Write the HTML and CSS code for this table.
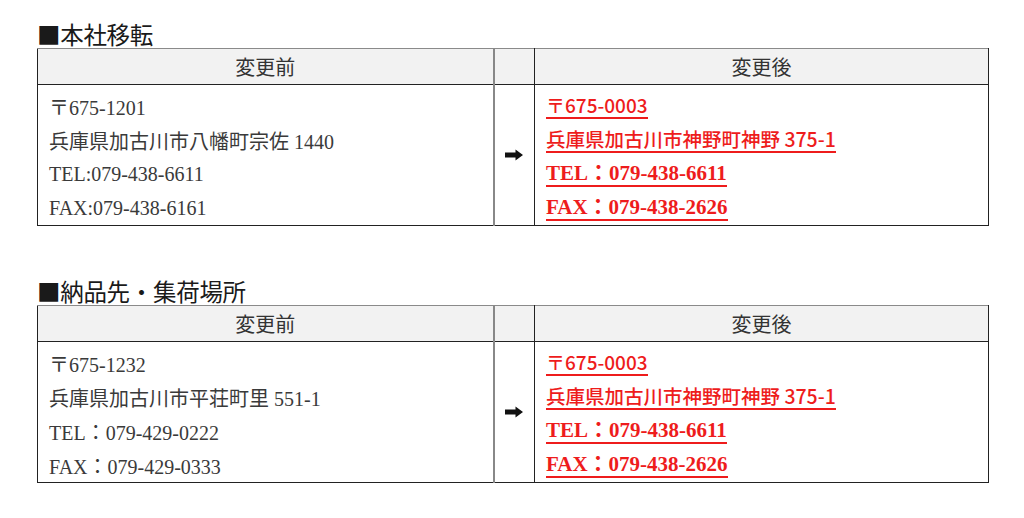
FILE: index.html
```html
<!DOCTYPE html>
<html lang="ja">
<head>
<meta charset="utf-8">
<link rel="stylesheet" href="styles.css">
</head>
<body>
<div class="page">
  <section class="block first">
    <h2 class="title">■本社移転</h2>
    <table class="change">
      <colgroup><col class="c-before"><col class="c-arrow"><col class="c-after"></colgroup>
      <thead>
        <tr><th>変更前</th><th class="arrow-head"></th><th>変更後</th></tr>
      </thead>
      <tbody>
        <tr>
          <td class="before">
            <div class="line">〒675-1201</div>
            <div class="line">兵庫県加古川市八幡町宗佐 1440</div>
            <div class="line">TEL:079-438-6611</div>
            <div class="line">FAX:079-438-6161</div>
          </td>
          <td class="arrow-cell"><svg class="arrow" width="18" height="12" viewBox="0 0 18 12"><path d="M0 3.5h10.5V0.5L18 6l-7.5 5.5v-3H0z" fill="#111"/></svg></td>
          <td class="after">
            <div class="line"><span class="mark sans">〒675-0003</span></div>
            <div class="line"><span class="mark sans addr">兵庫県加古川市神野町神野 375-1</span></div>
            <div class="line"><span class="mark serif">TEL：079-438-6611</span></div>
            <div class="line"><span class="mark serif">FAX：079-438-2626</span></div>
          </td>
        </tr>
      </tbody>
    </table>
  </section>

  <section class="block second">
    <h2 class="title">■納品先・集荷場所</h2>
    <table class="change">
      <colgroup><col class="c-before"><col class="c-arrow"><col class="c-after"></colgroup>
      <thead>
        <tr><th>変更前</th><th class="arrow-head"></th><th>変更後</th></tr>
      </thead>
      <tbody>
        <tr>
          <td class="before">
            <div class="line">〒675-1232</div>
            <div class="line">兵庫県加古川市平荘町里 551-1</div>
            <div class="line">TEL：079-429-0222</div>
            <div class="line">FAX：079-429-0333</div>
          </td>
          <td class="arrow-cell"><svg class="arrow" width="18" height="12" viewBox="0 0 18 12"><path d="M0 3.5h10.5V0.5L18 6l-7.5 5.5v-3H0z" fill="#111"/></svg></td>
          <td class="after">
            <div class="line"><span class="mark sans">〒675-0003</span></div>
            <div class="line"><span class="mark sans addr">兵庫県加古川市神野町神野 375-1</span></div>
            <div class="line"><span class="mark serif">TEL：079-438-6611</span></div>
            <div class="line"><span class="mark serif">FAX：079-438-2626</span></div>
          </td>
        </tr>
      </tbody>
    </table>
  </section>
</div>
</body>
</html>
```

FILE: styles.css
```css
html, body {
  margin: 0;
  padding: 0;
  background: #fff;
}

.page {
  padding: 20px 0 0 37px;
  font-family: "Noto Sans CJK JP", "Noto Sans", sans-serif;
  color: #333;
}

.block.second {
  margin-top: 51px;
}

.title {
  margin: 0;
  font-size: 23.5px;
  font-weight: 400;
  line-height: 28px;
  height: 28px;
  color: #1a1a1a;
  letter-spacing: -0.3px;
}

.change {
  border-collapse: collapse;
  width: 951px;
  table-layout: fixed;
}

.c-before { width: 456px; }
.c-arrow { width: 41px; }
.c-after { width: 454px; }

.change th {
  height: 35px;
  padding: 0;
  background: #f2f2f2;
  font-size: 20px;
  font-weight: 400;
  color: #333;
  text-align: center;
  border-top: 1px solid #8a8a8a;
  border-bottom: 1px solid #222;
  border-left: 1px solid #222;
  border-right: 1px solid #222;
  line-height: 35px;
}

.change td {
  padding: 4px 0 0 11px;
  height: 136px;
  vertical-align: top;
  border: 1px solid #222;
}

.change th:nth-child(1),
.change td:nth-child(1) {
  border-right: 2px solid #888;
}

.change td.arrow-cell {
  padding: 0;
  text-align: center;
  vertical-align: middle;
}

.arrow {
  display: block;
  margin: 0 auto;
}

.line {
  height: 34px;
  display: flex;
  align-items: center;
  white-space: nowrap;
}

.before .line {
  font-family: "Liberation Serif", "Noto Sans CJK JP", serif;
  font-size: 20px;
  color: #3a3a3a;
}

.mark {
  display: inline-block;
  line-height: 24px;
  color: #ee1c1c;
  font-weight: 700;
  border-bottom: 2px solid #ee1c1c;
}

.mark.sans {
  font-family: "Noto Sans CJK JP", "Noto Sans", sans-serif;
  font-size: 19px;
  font-weight: 500;
}

.mark.addr {
  font-size: 19.5px;
}

.mark.serif {
  font-family: "Liberation Serif", "Noto Sans CJK JP", serif;
  font-size: 21px;
}
```
